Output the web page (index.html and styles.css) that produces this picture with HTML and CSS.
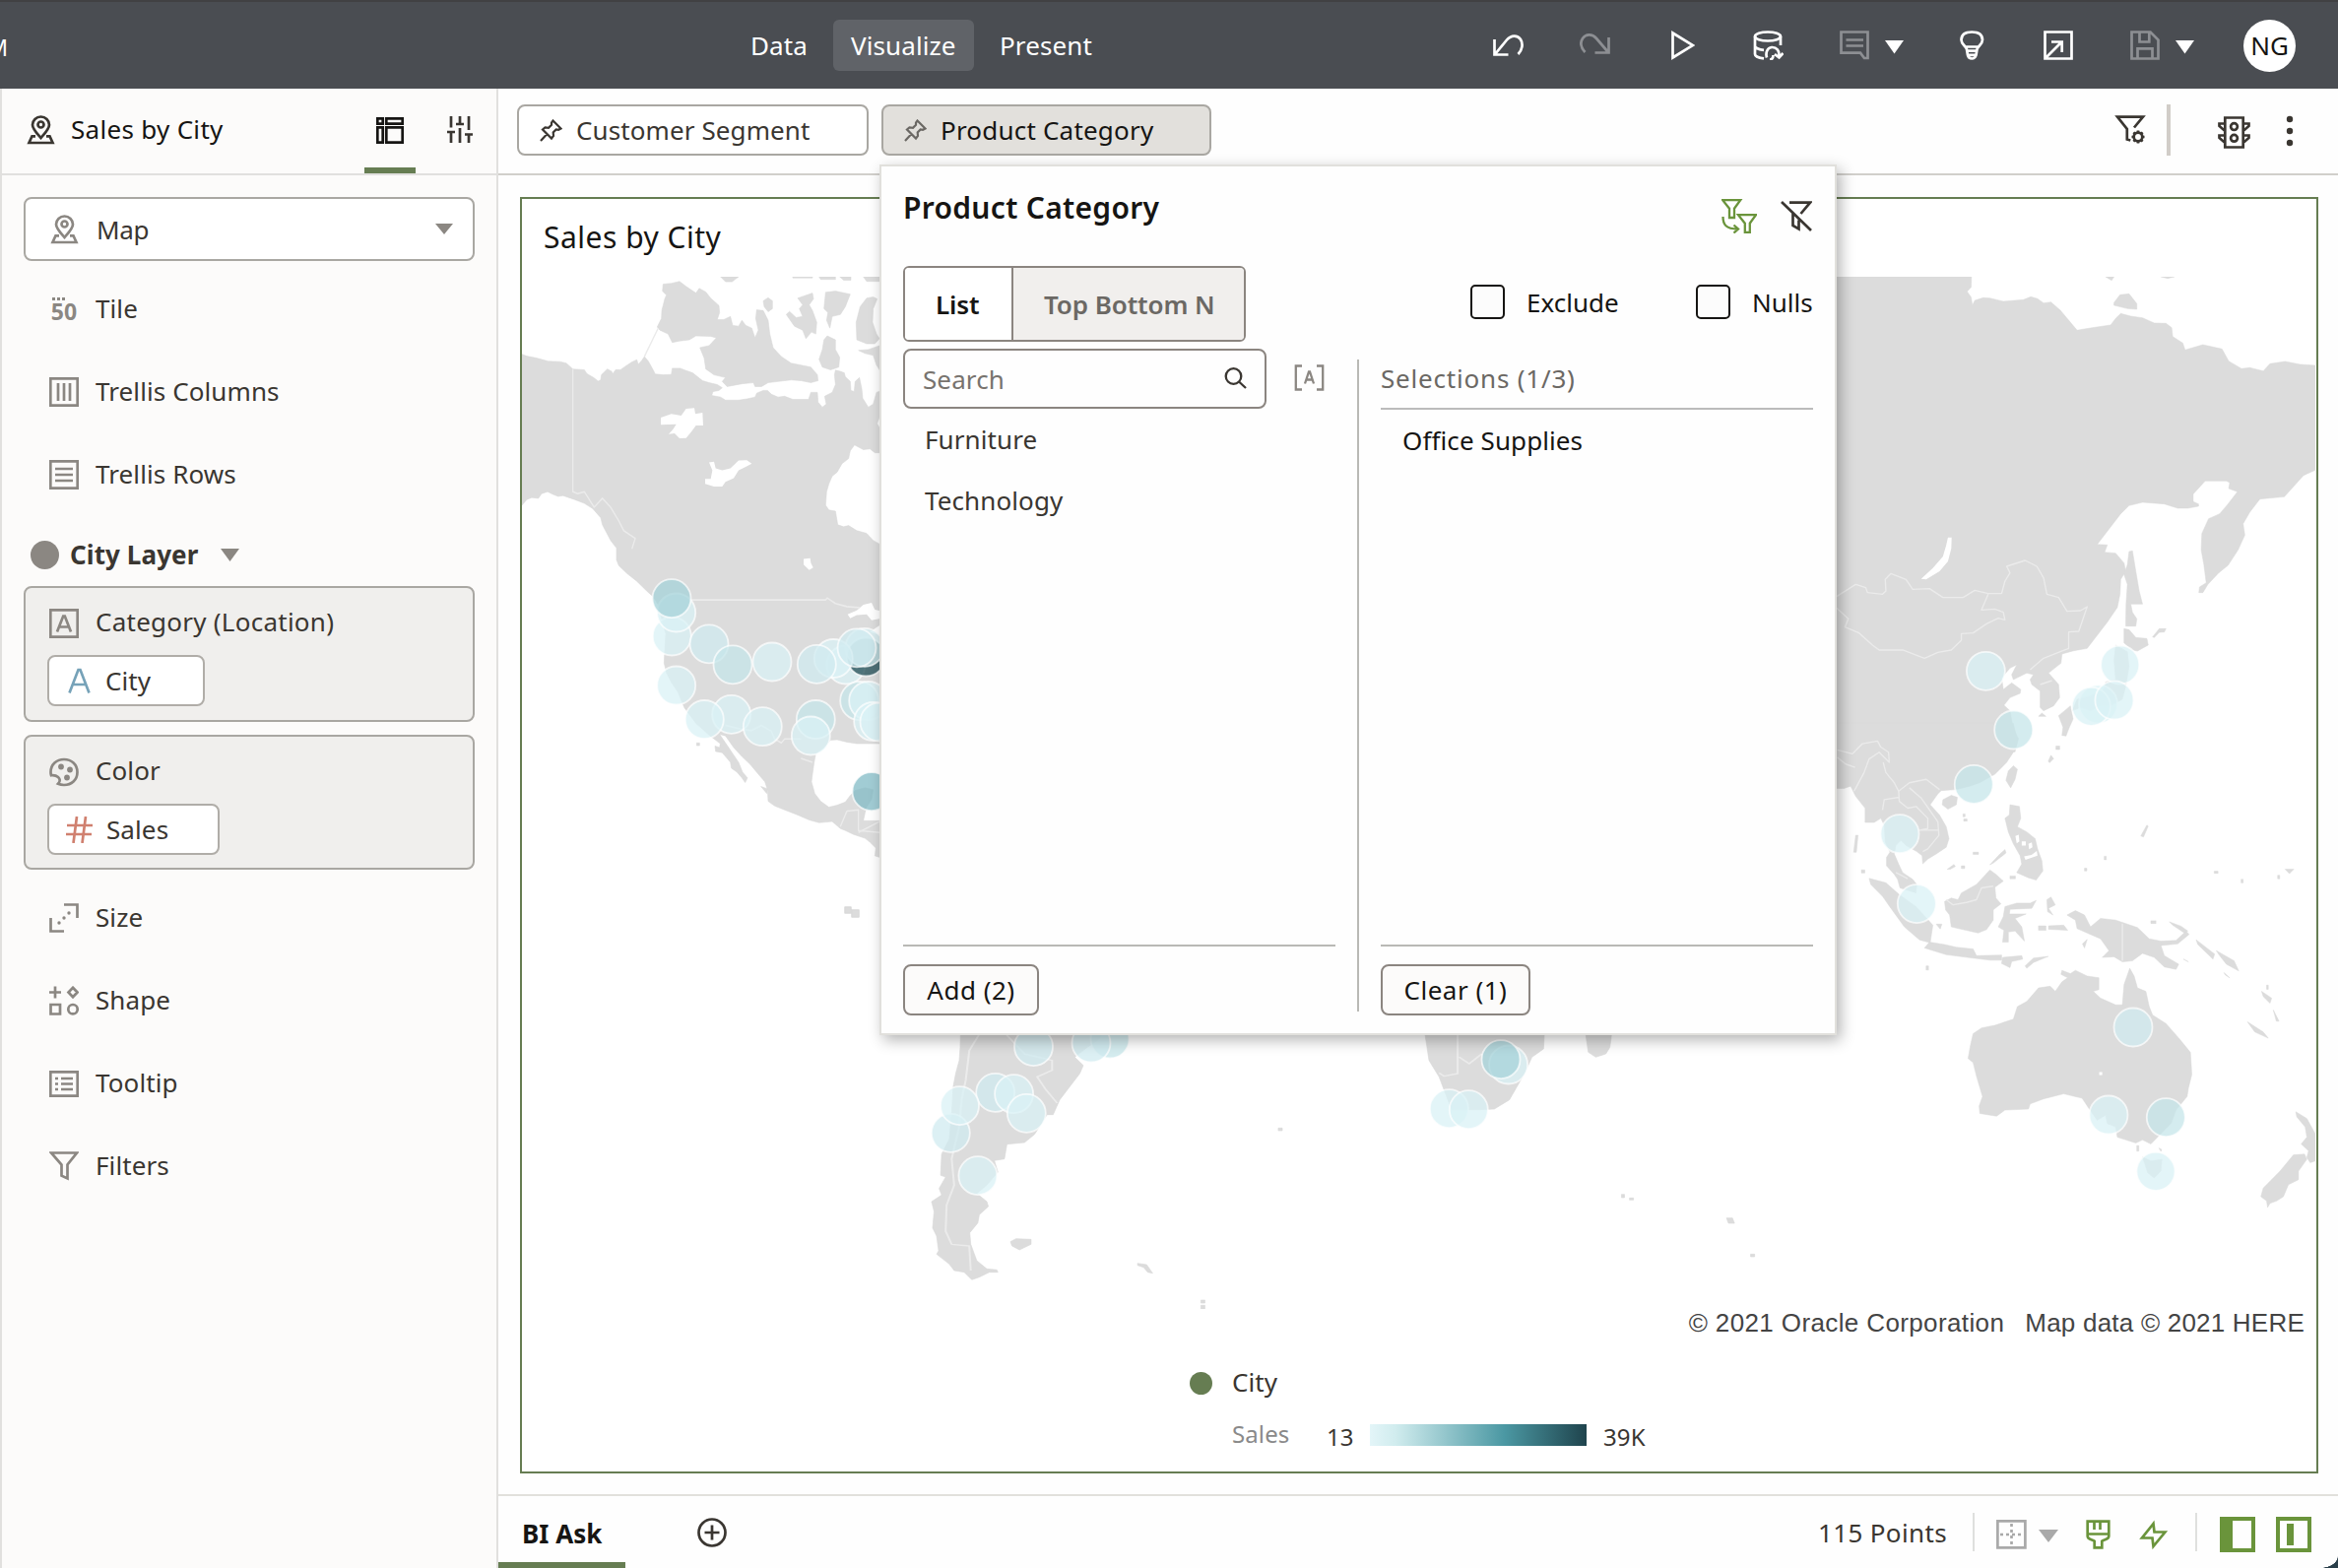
FILE: index.html
```html
<!DOCTYPE html>
<html lang="en">
<head>
<meta charset="utf-8">
<title>Sales by City</title>
<link rel="stylesheet" href="styles.css">
</head>
<body>
<header class="topbar">
  <span class="brand"><span>M</span></span>
  <nav class="modes">
    <a class="mode mode-data">Data</a>
    <a class="mode mode-visualize active">Visualize</a>
    <a class="mode mode-present">Present</a>
  </nav>
  <svg class="ic undo" width="31" height="22" viewBox="0 0 31 22"><path d="M1.500 5v15.500h14M2.500 19.500L14 5.500C18.500 .2 25 .5 28 5c2.800 4.500 1.800 10.500-2.500 15"/></svg>
  <svg class="ic redo dim" width="31" height="22" viewBox="0 0 31 22"><path d="M29.500 4v15.500h-14M28.500 18.500L17 5C12.500-.2 6 .5 3 5c-2.800 4.500-1.800 9.500 2.500 14"/></svg>
  <svg class="ic play" width="24" height="30" viewBox="0 0 24 30"><path d="M1.500 2.500v25L22 15z"/></svg>
  <svg class="ic db" width="31" height="30" viewBox="0 0 31 30"><ellipse cx="15" cy="6" rx="13" ry="4.500"/><path d="M2 6v18c0 2 4 3.800 9 4.400M28 6v9M2 15.500c0 2 4 3.800 9 4.300M14 27.500c-1.500-5 .5-10 5-10.500 5-.3 8 3.500 7.500 9M22 24l4.500 3.500 4-4.500M17 29.500c3 0 3.500-2 3.500-4.500"/></svg>
  <svg class="ic comment dim" width="30" height="30" viewBox="0 0 30 30"><path d="M1.500 1.500h27v26.500h-3.500l-4-5.300H1.500zM6.500 9.500h17.500M6.500 15.500h17.500"/></svg>
  <svg class="solid caret" width="19" height="14" viewBox="0 0 19 14"><path d="M0 0h19L9.500 13.500z"/></svg>
  <svg class="ic bulb" width="25" height="30" viewBox="0 0 25 30"><path d="M7 19C6 15.500 1.500 14 1.500 9.500 1.500 4 6 1.500 12.200 1.500S23 4 23 9.500C23 14 18.500 15.500 17.500 19l-1 6q-1 3.500-4.300 3.500T8 25zM5.500 16.500h13.500M7.500 20.700h9.500M9 24.800h6.500"/></svg>
  <svg class="ic export" width="30" height="30" viewBox="0 0 30 30"><path d="M1.500 1.500h27v27h-27zM2.500 27.500L18 12M8 11.500h10.700V22"/></svg>
  <svg class="ic save dim" width="30" height="30" viewBox="0 0 30 30"><path d="M1.500 1.500H20.500l8 8v19h-27zM9.500 2v9.500h9.800V2M7.500 28V18.300H22.500V28"/></svg>
  <svg class="solid caret" width="19" height="14" viewBox="0 0 19 14"><path d="M0 0h19L9.500 13.500z"/></svg>
  <span class="avatar">NG</span>
</header>

<div class="workspace">
<aside class="grammar">
  <div class="grammar-head">
    <svg class="ic" width="29" height="30" viewBox="0 0 29 30"><path d="M14.500 23C10 18 6 14 6 9.800a8.500 8.300 0 0 1 17 0C23 14 19 18 14.500 23zM9 21.300H5.500L2.500 28h24l-3-6.700H20"/><circle cx="14.500" cy="9.500" r="3"/></svg>
    <span class="grammar-title">Sales by City</span>
    <span class="grammar-tab">
      <svg class="ic" width="28" height="27" viewBox="0 0 28 27"><path d="M1.300 1.300h5.400v5.400H1.300zM10.300 1.300h16.400v5.400H10.300zM1.300 10.300h5.400v15.400H1.300zM10.300 10.300h16.400v15.400H10.300z"/></svg>
    </span>
    <svg class="ic sliders" width="26" height="27" viewBox="0 0 26 27"><path d="M4 0v11.500M0 16h8M4 16v11M13 0v7.500M9 8h8M13 12v15M22 0v14M18 18.500h8M22 18.500V27"/></svg>
  </div>
  <div class="grammar-body">
    <div class="viz-select">
      <svg class="ic" width="29" height="30" viewBox="0 0 29 30"><path d="M14.500 23C10 18 6 14 6 9.800a8.500 8.300 0 0 1 17 0C23 14 19 18 14.500 23zM9 21.300H5.500L2.500 28h24l-3-6.700H20"/><circle cx="14.500" cy="9.500" r="3"/></svg>
      <span class="viz-name">Map</span>
      <svg class="solid" width="18" height="11" viewBox="0 0 18 11"><path d="M0 0h18L9 11z"/></svg>
    </div>
    <div class="row"><span class="tile-ic"><i></i><b>50</b></span><span>Tile</span></div>
    <div class="row"><svg class="ic" width="30" height="30" viewBox="0 0 30 30"><path d="M1.300 1.300h27.400v27.400H1.300zM9 6v18M15 6v18M21 6v18"/></svg><span>Trellis Columns</span></div>
    <div class="row"><svg class="ic" width="30" height="30" viewBox="0 0 30 30"><path d="M1.300 1.300h27.400v27.400H1.300zM6 9h18M6 15h18M6 21h18"/></svg><span>Trellis Rows</span></div>
    <div class="layer"><i class="layer-dot"></i><b>City Layer</b><svg class="solid" width="19" height="13" viewBox="0 0 19 13"><path d="M0 0h19L9.500 13z"/></svg></div>
    <section class="edge">
      <div class="edge-label"><svg class="ic" width="30" height="30" viewBox="0 0 30 30"><path d="M1.300 1.300h27.400v27.400H1.300zM8 23.500l6.200-16h1.600l6.200 16M10.500 18.500h9"/></svg><span class="label-wide">Category (Location)</span></div>
      <div class="pill pill-city"><svg class="ic attr" width="23" height="26" viewBox="0 0 23 26"><path d="M1.500 25.500L10.500 2h2l9 23.500M5 17h13"/></svg><span>City</span></div>
    </section>
    <section class="edge edge-color">
      <div class="edge-label"><svg class="ic" width="30" height="30" viewBox="0 0 30 30"><path d="M1.500 15C1.500 7 7.500 2 15 2s13.500 5 13.500 13S22.500 28 15 28c-2 0-4-.3-6-1.200 2.500-2.500 2-5 0-6.800-2.200-2-5-2-7-1.800-.4-1-.5-2-.5-3.200z"/><g class="dots"><circle cx="12" cy="9.500" r="2.900"/><circle cx="21" cy="12.500" r="2.900"/><circle cx="18" cy="20.500" r="2.900"/></g></svg><span>Color</span></div>
      <div class="pill pill-sales"><svg class="ic meas" width="27" height="27" viewBox="0 0 27 27"><path d="M11 0L7.500 27M20 0l-3.500 27M1 9h26M0 18h26"/></svg><span>Sales</span></div>
    </section>
    <div class="row row-size"><svg class="ic" width="30" height="30" viewBox="0 0 30 30"><path d="M15 1.500h13.500V15M1.500 15v13.500H15"/><g class="dots"><circle cx="10" cy="20" r="1.700"/><circle cx="15" cy="15" r="1.700"/><circle cx="20" cy="10" r="1.700"/></g></svg><span>Size</span></div>
    <div class="row"><svg class="ic" width="30" height="30" viewBox="0 0 30 30"><path d="M0 6.500h12M6 .5v12M24 1.800l4.500 4.700-4.500 4.700-4.500-4.700zM1.500 19h9.500v9.500H1.500z"/><circle cx="24" cy="23.700" r="4.700"/></svg><span>Shape</span></div>
    <div class="row"><svg class="ic" width="30" height="27" viewBox="0 0 30 27"><path d="M1.300 1.300h27.400v24.400H1.300zM12 8h12M12 13.500h12M12 19h12M6 8h3M6 13.500h3M6 19h3"/></svg><span>Tooltip</span></div>
    <div class="row"><svg class="ic" width="30" height="30" viewBox="0 0 30 30"><path d="M2 1.500h26L18.500 13.500V27.500l-6-2.800V13.500z"/></svg><span>Filters</span></div>
  </div>
</aside>

<main class="main">
  <div class="filterbar">
    <div class="chip chip-segment"><svg class="ic" width="23" height="23" viewBox="0 0 23 23"><path d="M13.500 1.500l8 8-2.500 1.300-2.300-.3-3 3 .3 3.500-2 2.500-9-9 2.500-2 3.500.3 3-3L12 3.500zM7 15.500L1 22"/></svg><span>Customer Segment</span></div>
    <div class="chip chip-category"><svg class="ic" width="23" height="23" viewBox="0 0 23 23"><path d="M13.500 1.500l8 8-2.500 1.300-2.300-.3-3 3 .3 3.500-2 2.500-9-9 2.500-2 3.500.3 3-3L12 3.500zM7 15.500L1 22"/></svg><span>Product Category</span></div>
    <svg class="ic filter-gear" width="32" height="29" viewBox="0 0 32 29"><path d="M20 12.500L29 1.700H3l9.800 12.300v10.500l3.500 1"/><circle cx="24" cy="22" r="4.300"/><path d="M24 15.500v3M24 25.500v3M17.500 22h3M27.500 22h3M19.400 17.400l2 2M26.600 24.600l2 2M19.400 26.600l2-2M26.600 19.400l2-2"/></svg>
    <i class="bar-sep"></i>
    <svg class="ic traffic" width="33" height="33" viewBox="0 0 33 33"><path d="M7.300 1.500h18.400v30H7.300zM7.300 7.500H1.500V10L7.300 15M25.700 7.500h5.800V10L25.700 15M7.300 19.500H1.500V22L7.300 27M25.700 19.500h5.800V22L25.700 27"/><circle cx="16.500" cy="10.600" r="3.400"/><circle cx="16.500" cy="22.300" r="3.400"/></svg>
    <svg class="solid kebab" width="8" height="32" viewBox="0 0 8 32"><circle cx="4" cy="4" r="3.200"/><circle cx="4" cy="16" r="3.200"/><circle cx="4" cy="28" r="3.200"/></svg>
  </div>

  <div class="canvas">
    <section class="card">
      <h2>Sales by City</h2>
      <svg class="map" width="1821" height="1048" viewBox="530 281 1821 1048">
        <g transform="translate(520 260) scale(.33333 .3954)">
          <g class="land">
            <path d="M30 252L45 257 75 262 110 270 145 271 165 275 185 290 220 292 228 302 248 312 262 321 270 318 272 305 290 290 303 296 307 302 315 292 330 292 345 283 365 272 380 266 384 278 395 268 403 258 415 270 430 293 436 303 460 305 485 304 488 288 512 288 530 294 550 300 580 320 600 325 625 330 640 338 630 345 612 348 608 358 635 362 650 370 690 370 720 366 740 362 745 352 765 345 778 345 790 355 810 362 830 360 855 368 885 368 903 368 910 350 930 350 932 375 945 388 957 380 952 360 975 350 985 330 982 305 985 293 1000 296 1012 300 1015 310 1030 322 1032 345 1042 348 1045 322 1058 312 1065 340 1068 365 1085 388 1100 380 1110 350 1125 345V400L1112 430 1125 450V505H1105L1090 495 1070 497 1043 485 1030 500 1025 520 1005 533 990 555 975 565 965 585 958 605 955 640 965 652 985 655 992 690 1010 695 1025 692 1050 705 1080 712 1100 730 1125 742V1252H1050L1020 1248 990 1242 970 1243 950 1262 925 1278 920 1300 915 1330 912 1350 922 1380 940 1400 965 1415 990 1410 1015 1402 1030 1385 1045 1372 1075 1365 1100 1370 1095 1395 1080 1415 1075 1430 1070 1450H1125V1545L1105 1540 1108 1520 1090 1505 1075 1495 1040 1485 1015 1475 1000 1470 975 1452 935 1455 905 1448 870 1435 830 1422 800 1412 780 1400 778 1370 770 1350 750 1330 725 1305 700 1285 675 1262 650 1232 632 1228 650 1250 670 1275 690 1300 702 1325 717 1340 710 1352 700 1340 685 1325 668 1315 665 1300 650 1285 640 1275 620 1272 618 1258 632 1262 634 1252 600 1230 560 1200 525 1160 520 1150 505 1120 485 1095 470 1070 463 1045 465 1010 468 970 455 930 445 895 430 875 410 860 380 835 350 815 325 795 318 780 318 750 300 730 275 690 270 672 245 648 220 635 190 625 155 615 140 617 125 612 108 605 90 610 80 622 60 620 45 625 30 640z"/>
            <path d="M460 72L485 70 510 65 530 78 560 95 570 83 590 92 605 108 630 127 632 145 625 163 645 163 665 155 672 178 690 180 700 165 712 178 730 185 740 210 750 190 742 160 745 138 765 140 780 165 785 200 795 235 820 258 850 275 880 280 910 285 930 305 932 320 910 325 880 320 850 318 810 322 780 325 760 335 740 335 735 325 700 328 655 335 640 322 650 312 615 305 590 290 585 262 572 235 600 230 622 210 605 206 560 205 540 215 510 218 488 222 475 200 450 190 442 182 455 160 456 140 465 110 470 100 458 90z"/>
            <path d="M765 115L780 107 793 115V135L780 143 768 130zM870 108L915 95 918 110 905 125 915 140 928 170 925 200 912 195 895 212 885 190 860 180 835 150 845 142 865 158 885 155 875 135 885 125zM955 93L985 90 1030 98 1015 130 1000 150 975 155 968 185 958 165 962 145 950 135zM960 205L985 215V240L998 260 995 285 970 292 945 285 935 265 945 240 950 215zM1080 108L1100 105 1112 110 1100 135 1098 170 1110 200 1119 212 1105 225 1080 225 1050 215 1048 170 1060 130zM1055 242L1085 240 1119 230 1125 300 1110 280 1100 255 1075 250zM635 53H690L670 66H650zM855 53H915V56H855zM935 53H985V60H940zM998 53H1032V62H1010zM1070 53H1125V65H1080zM758 1362L778 1368 776 1380zM562 1250H571V1257H562z"/>
          </g>
          <g class="water">
            <path d="M453 415L485 405 515 410 530 392 555 390 558 405 580 402 582 435 560 435 545 452 530 467 510 468 495 455 477 457 490 445 500 432 453 433zM600 530L615 528 620 545 640 550 665 545 690 525 715 524 730 533 710 542 690 550 675 570 650 580 640 592 615 592 588 585V572H605L610 550zM888 778L908 776 910 788 917 800 905 806 888 792zM1022 920L1050 910 1070 895 1095 890 1105 908 1125 912V930L1095 935 1080 920 1050 922 1030 930zM1090 965L1125 945V975z"/>
          </g>
          <path class="borders" d="M185 290V605L200 610 220 605 235 625 250 645 275 622 300 645 325 680 340 705 375 725 365 752M545 883H955L960 878 985 892 1020 900 1060 903M403 258L445 185M650 1205L700 1215 730 1218 760 1205 790 1220 800 1240 820 1250 830 1240 880 1240M880 1290L915 1300M1000 1465L1020 1425 1055 1422V1475L1119 1480M1119 1452L1055 1480"/>
        </g>
        <path class="land" d="M858 921h6v6h-6zM865 924h7v7h-7z"/>
        <g transform="translate(1840 260) scale(.3406 .33333)">
          <g class="land">
            <path d="M60 63H475L474 95 462 108 474 125 478 150 485 135 510 127 530 128 570 138 630 133 652 124 672 130 690 143 712 140 740 165 790 226 830 219 890 210 905 190 920 175 950 183 985 188 1020 204 1055 205 1072 218 1075 245 1105 265 1112 286 1165 270 1222 283 1242 320 1280 343 1305 340 1345 350 1365 328 1410 321 1455 330 1500 333V652L1465 668 1408 733 1335 740 1305 780 1285 815 1290 850 1270 895 1240 942 1212 965 1180 1000 1165 1025 1153 1025 1155 1008 1175 995 1168 940 1160 895 1162 845 1182 800 1215 785 1240 755 1268 718 1242 708 1245 690 1235 685H1172L1136 725V748L1152 755V762L1120 768H1090L1050 755 985 750 945 760 920 785 850 878 880 880 872 902 905 905 930 935 935 960 920 985 918 1030 910 1070 880 1115 850 1155 820 1195 780 1202 745 1212 742 1240 705 1270 735 1305 738 1345 720 1370 690 1385 680 1375V1325L655 1305 650 1290 660 1275 640 1270 600 1290 595 1275 610 1245 590 1255 565 1285 570 1320 595 1300 622 1320 620 1332 590 1345 572 1368 590 1385 600 1440 615 1470 605 1510H60z"/>
            <path d="M945 900L955 898 965 960 975 1020 985 1060 950 1060 955 1085 968 1105 965 1127H935L936 1060 940 1000 930 970 940 940zM930 1135L945 1138 965 1162 998 1165 1002 1185 970 1203 955 1200 930 1178zM1015 1160L1035 1135 1055 1135 1050 1145 1035 1146 1020 1162zM905 1185L940 1205 945 1250 935 1310 925 1350 890 1370 860 1370 830 1385 800 1375 775 1385 790 1350 830 1340 870 1320 875 1297 905 1290 900 1230zM735 1400L770 1370 778 1410 765 1440 757 1462 745 1460 748 1435zM675 1402L685 1392 697 1402zM900 142L918 118 945 115 968 145V162L940 160 900 150zM875 63H900L893 74zM1040 63H1080L1060 68z"/>
          </g>
          <path class="water" d="M405 857H416L415 890 405 930 380 960 340 985 325 983 360 950 390 915 400 880z"/>
          <path class="borders" d="M73 1037L130 1000 160 1010 165 1025 210 1030 220 1020 218 985 235 967 280 985 300 1015 350 1013 390 1040 450 1040 485 1018 525 1028 565 1028 575 990 590 965 580 945 635 927 670 945 690 980 700 1030 735 1040 760 1082 800 1080 820 1068 795 1143 765 1145V1195L740 1205 690 1225 650 1260M73 1072L108 1105 98 1130 140 1148 180 1185 200 1200 270 1200 335 1225 375 1207 415 1200 445 1170V1150L480 1148 520 1120 555 1103 575 1108 570 1085 545 1075 505 1078 525 1030M680 1305L715 1293"/>
        </g>
        <g transform="translate(1840 700) scale(.3406 .3444)">
          <g class="land">
            <path d="M60 100H600L612 150 600 185 580 215 545 250 500 275 470 285 430 295 385 298 375 308 352 340 380 370 400 405 408 440 400 465 370 485 345 500 330 514 328 490 312 478 280 460 265 445 250 460 245 485 258 515 270 540 300 560 312 575 310 600 285 592 262 585 255 560 245 545 222 520V495L232 480 218 450 215 400 205 380 185 392H158V350L130 315 115 285 95 292H60z"/>
            <path d="M390 325L415 312 433 318 430 340 405 353 388 340zM600 225L612 235 605 265 592 290 578 268 585 240zM590 340L618 345 622 380 612 405 640 420 665 440 672 470 685 505 688 535 668 562 645 555 610 540 625 515 620 490 600 455 585 420 575 380 588 370zM530 517L560 485 575 472 578 482 540 512zM170 557L220 570 260 605 310 640 360 695 352 747 320 738 275 700 235 645 210 610 175 575zM395 625L415 615 435 620 445 600 490 575 530 532 548 545 570 565 545 583 548 615 563 632 540 650V680L520 708 495 718 450 708 415 700 410 665 398 650zM350 745L395 752 430 760 480 765 490 785 565 783V798H530L480 792 400 782 335 762zM568 790L625 785 628 795 595 802 590 820 565 808zM635 815L660 792 704 787 660 805 640 822zM575 640L610 630 650 630 668 622 655 645 590 648 588 662 638 662 605 675 625 700 633 742 605 712 585 715V745H568L572 710 555 700 570 670zM700 620L712 612 725 635 705 645 718 665 702 655zM705 697L750 695 762 710 705 707zM675 697H697V710H675zM370 692H387L382 706zM760 665L785 652 812 665 830 700 860 675 905 680 970 702 1005 735 1040 742 1085 740 1115 712 1124 722 1090 750 1040 755 1050 785 1093 810 1085 825 1050 818 1020 790 985 778 955 800 925 803 900 788 865 790 885 770 860 735 820 718 790 705 785 680zM1065 685L1100 698 1120 712 1110 718 1075 695zM1145 738L1200 780 1195 795 1150 752zM1205 770L1258 800 1272 830 1235 810 1215 785zM1228 835L1245 850 1232 842zM1107 795L1122 803zM1340 890L1370 910 1365 925 1345 905zM1355 872h5v12h-5zM1375 945L1392 978 1384 978zM1298 980L1345 1010 1360 1028 1320 1010zM820 737L812 762 806 750zM1010 682h15v8h-15zM130 430h7l-5 50h-8zM147 532h10v9h-10zM340 815h7v12h-7zM450 367h6v8h-6zM452 382h10v6h-10zM480 480h16v6h-16zM403 530l20-14 4 6-15 8zM445 520h10v8h-10zM590 550h16v8h-16zM871 492h6v10h-6zM812 527h7v8h-7zM980 432l18-32 4 3-14 32zM1199 536h11v6h-11zM1410 530h26l-13 13zM1279 560h6v10h-6zM1388 548h6v10h-6zM704 212l8-18 8 10-12 12zM727 167h11v10h-11z"/>
            <path d="M480 1015L505 998 545 990 600 972 612 935 640 920 675 880 710 875 725 890 745 862 762 850 742 840 745 828 770 838 785 828 820 845 855 850V885L838 890 860 910 905 930 925 930 930 870 947 822 960 845 970 880 995 890 1005 935 1015 960 1055 985 1095 1030 1128 1070 1132 1135 1122 1175 1118 1200 1085 1240 1070 1280 1030 1320 1010 1340 985 1328 965 1337 910 1320 905 1290 880 1280 875 1255 850 1270 825 1235 805 1205 750 1192 690 1207 650 1222 645 1237 575 1240 550 1258 500 1250 498 1228 508 1200 490 1140 480 1100 465 1088 472 1050z"/>
            <path d="M985 1378L1010 1390 1043 1385 1040 1420 1020 1440 1000 1425zM968 1345h6v16h-6zM1034 1352l8 4-2 6zM1442 1245L1475 1265 1500 1310V1390L1485 1395 1475 1380 1480 1360 1458 1340 1475 1320 1470 1290 1445 1260zM1435 1372L1468 1370 1475 1385 1450 1420V1445L1420 1460 1405 1495 1385 1508 1365 1515 1358 1527 1355 1508 1338 1495 1345 1470 1395 1420z"/>
          </g>
          <path class="water" d="M606 432l10-4 2 20-8 6zM625 448h12v12h-12zM645 455l10-4 2 14-10 6zM632 492l22-4 16-12 2 14-36 12zM856 1128h9v9h-9z"/>
          <path class="borders" d="M75 178L120 190 150 160 195 152 205 170 228 185 230 215 200 185 170 205 155 245 125 300M212 215L220 245 245 275 258 300 290 275 340 265 380 295M258 300L260 330 285 350 310 345 345 380 345 410 320 415M210 355L215 325 258 318M290 290L325 320 350 355 375 390 378 430 345 470 330 478M320 415H375M250 540L285 558M400 620L420 635 460 628 490 620 505 585 540 580M925 690V800M75 200L100 220 128 230"/>
        </g>
        <g transform="translate(900 930) scale(.5102 .33333)">
          <g class="land">
            <path d="M148 340L147 400 145 440 138 480 133 520 130 600 125 680 110 725 108 790 118 795 105 830 110 850 90 870 95 900 92 950 100 975 104 1020 100 1030 125 1060 135 1080 155 1085 170 1108 185 1100 205 1085H222L220 1078 200 1075 180 1050 168 1000 166 965 182 935 185 910 203 885 200 870 180 845 200 820 222 780 215 745 235 740 240 695 275 690 295 665 320 605 332 605 345 560 370 510 385 480 392 455 375 430 400 400 420 380 440 340z"/>
            <path d="M247 992L258 983 288 985V1000L265 1017 250 1005zM500 1058L518 1062 530 1088 520 1085 512 1070 500 1064zM780 646h8v8h-8zM1463 848h6v10h-6zM1479 859h8v6h-8zM626 1170h8v9h-8zM626 1186h8v12h-8zM1672 920h12l4 16h-12zM1720 1030h8v8h-8z"/>
            <path d="M1070 340L1080 440 1100 490 1110 530 1125 590 1180 590 1210 588 1240 560 1270 480 1285 430 1308 405 1310 340zM1390 340L1445 340 1440 400 1432 420 1412 430 1397 415z"/>
          </g>
          <path class="borders" d="M185 360L165 410 158 500 150 560 145 640 130 740 135 820 120 880 118 960 130 1000 165 1005 168 1080M235 355L275 420 330 440 330 470 300 490 318 530 340 570M1137 355V480L1110 488 1100 478M1140 430L1160 450 1185 420"/>
        </g>
        <g class="bubbles">
          <circle cx="859" cy="675" r="19.500"/><circle cx="879.300" cy="667" r="19.500" class="v5"/><circle cx="878" cy="657.400" r="19.500"/>
          <circle cx="682.300" cy="646" r="19.500"/><circle cx="686.700" cy="622" r="19.500"/><circle cx="682" cy="607.600" r="19.500" class="v3"/>
          <circle cx="720" cy="653.800" r="19.500" class="v1"/><circle cx="744" cy="674.800" r="19.500" class="v2"/><circle cx="784" cy="672" r="19.500"/>
          <circle cx="846.300" cy="668.500" r="19.500"/><circle cx="829.300" cy="674.400" r="19.500" class="v1"/><circle cx="870" cy="657.800" r="19.500" class="v1"/>
          <circle cx="686.700" cy="696" r="19.500"/><circle cx="742.700" cy="725.400" r="19.500"/><circle cx="715.300" cy="730.500" r="19.500"/><circle cx="774.300" cy="737.700" r="19.500"/>
          <circle cx="828.300" cy="730.500" r="19.500" class="v2"/><circle cx="823.300" cy="747" r="19.500"/><circle cx="872.700" cy="711.500" r="19.500" class="v2"/><circle cx="881.700" cy="711.500" r="19.500"/>
          <circle cx="886.700" cy="732.500" r="19.500"/><circle cx="893" cy="733" r="19.500"/><circle cx="885" cy="803.700" r="19.500" class="v4"/>
          <circle cx="2044.700" cy="741" r="19.500" class="v2"/><circle cx="2004.200" cy="796.400" r="19.500" class="v2"/><circle cx="1929" cy="846.700" r="19.500"/><circle cx="1946.300" cy="917.600" r="19.500"/>
          <circle cx="2166" cy="1043" r="19.500" class="v1"/><circle cx="2141" cy="1132" r="19.500"/><circle cx="2199.300" cy="1134.600" r="19.500" class="v2"/><circle cx="2189" cy="1189.300" r="19.500"/>
          <circle cx="2016.400" cy="681.300" r="19.500"/><circle cx="2152.700" cy="675" r="19.500"/><circle cx="2130.500" cy="715" r="19.500"/><circle cx="2123.400" cy="717.300" r="19.500"/><circle cx="2146.900" cy="711" r="19.500"/>
          <circle cx="1049.500" cy="1062.700" r="19.500" class="v1"/><circle cx="1127" cy="1055" r="19.500" class="v2"/><circle cx="1108" cy="1059" r="19.500" class="v1"/>
          <circle cx="1010.700" cy="1109.300" r="19.500" class="v1"/><circle cx="1029.600" cy="1110.700" r="19.500"/><circle cx="1042.300" cy="1130.300" r="19.500"/>
          <circle cx="965.300" cy="1150.300" r="19.500" class="v1"/><circle cx="974.500" cy="1122.700" r="19.500"/><circle cx="992.900" cy="1193.700" r="19.500"/>
          <circle cx="1531.600" cy="1081" r="19.500"/><circle cx="1524" cy="1075.700" r="19.500" class="v3"/><circle cx="1471.400" cy="1125.700" r="19.500"/><circle cx="1491.300" cy="1126.700" r="19.500"/>
        </g>
      </svg>
      <div class="credits"><span class="credit-owner">© 2021 Oracle Corporation</span><span>Map data © 2021 HERE</span></div>
      <div class="legend">
        <div class="legend-layer"><i></i><span>City</span></div>
        <div class="legend-scale"><span class="scale-name">Sales</span><span class="scale-min">13</span><i></i><span class="scale-max">39K</span></div>
      </div>
    </section>
  </div>

  <footer class="footer">
    <div class="sheet"><b>BI Ask</b></div>
    <svg class="ic add-sheet" width="30" height="30" viewBox="0 0 30 30"><circle cx="15" cy="15" r="13.500"/><path d="M15 7.500v15M7.500 15h15"/></svg>
    <span class="points">115 Points</span>
    <i class="foot-sep"></i>
    <svg class="ic grid-ic" width="31" height="30" viewBox="0 0 31 30"><path d="M1.400 1.400h28v27h-28z"/><path stroke-dasharray="3 3" d="M15.500 4v22M4 15h24"/></svg>
    <svg class="solid grid-caret" width="20" height="13" viewBox="0 0 20 13"><path d="M0 0h20L10 13z"/></svg>
    <svg class="ic green brush" width="25" height="30" viewBox="0 0 25 30"><path d="M1.700 1.700h21.600v15c0 3.500-5.500 3.500-7 5v6.600H8.700v-6.600c-1.500-1.500-7-1.500-7-5zM1.700 14.500h21.600M8.500 2v8M14.500 2v8"/></svg>
    <svg class="ic green bolt" width="29" height="31" viewBox="0 0 29 31"><path d="M14.500 4L3 18.500h10.500l1 8.500L26.500 12.500H15.500z"/></svg>
    <i class="foot-sep foot-sep2"></i>
    <svg class="ic green panel-a" width="36" height="36" viewBox="0 0 36 36"><path d="M2 2h32v32H2z"/><path class="block" d="M2 2h11v32H2z"/></svg>
    <svg class="ic green panel-b" width="36" height="36" viewBox="0 0 36 36"><path d="M2 2h32v32H2z"/><path class="block" d="M11 7h7v22h-7z"/></svg>
  </footer>
</main>
</div>

<section class="popup">
  <div class="popup-head">
    <h3>Product Category</h3>
    <svg class="ic green chain" width="36" height="35" viewBox="0 0 36 35"><path d="M1.200 1.200h18l-6.200 8.500v9.300H8V9.700zM17 16.200h18l-6.200 8.500V34h-5v-9.300zM1.500 18c0 8 3 12.500 15 12.500M12.500 26.500l4.500 4-4.500 4"/></svg>
    <svg class="ic filter-off" width="32" height="31" viewBox="0 0 32 31"><path d="M9 1.700h21L20.500 13M12.500 12v13l6 3.500v-9M1 1l30 29"/></svg>
  </div>
  <div class="controls">
    <div class="toggle"><span class="t-list">List</span><span class="t-top">Top Bottom N</span></div>
    <label class="check check-exclude"><i></i><span>Exclude</span></label>
    <label class="check"><i></i><span>Nulls</span></label>
  </div>
  <div class="picker">
    <div class="col">
      <div class="search-row">
        <div class="search"><span>Search</span><svg class="ic" width="23" height="22" viewBox="0 0 23 22"><circle cx="9.500" cy="9" r="7.800"/><path d="M15 14.500l7 6.500"/></svg></div>
        <svg class="ic match" width="31" height="27" viewBox="0 0 31 27"><path d="M8 1.500H1.800v24H8M23 1.500h6.200v24H23M11 19.500L15 7.500h1l4 12M12.500 15.500h6"/></svg>
      </div>
      <ul class="values"><li>Furniture</li><li>Technology</li></ul>
      <button class="btn-add">Add (2)</button>
    </div>
    <i class="divider"></i>
    <div class="col">
      <div class="sel-head">Selections (1/3)</div>
      <ul class="values chosen"><li>Office Supplies</li></ul>
      <button class="btn-clear">Clear (1)</button>
    </div>
  </div>
</section>
<i class="corner"></i>
</body>
</html>
```
FILE: styles.css
```css
* { box-sizing: border-box; }
html, body { margin: 0; }
body {
  width: 2374px;
  height: 1592px;
  overflow: hidden;
  position: relative;
  display: flex;
  flex-direction: column;
  background: #fefefe;
  color: #3a3631;
  font-family: "Noto Sans", "Open Sans", sans-serif;
  font-size: 26px;
  line-height: 36px;
  letter-spacing: .1px;
}
h2, h3, ul { margin: 0; padding: 0; font-weight: 400; list-style: none; }
i { display: block; flex: none; }
b { font-weight: 600; }
svg { display: block; flex: none; }
span, a { white-space: nowrap; }
.ic { fill: none; stroke: currentColor; stroke-width: 2.7; }
.solid, .dots, .block { fill: currentColor; stroke: none; }

/* top bar */
.topbar {
  height: 90px;
  flex: none;
  display: flex;
  align-items: center;
  background: #4a4d52;
  border-top: 2px solid #414143;
  color: #fff;
}
.brand { width: 8px; margin-right: 736px; display: flex; justify-content: flex-end; overflow: hidden; font-size: 23px; letter-spacing: 0; padding-top: 4px; }
.modes { display: flex; gap: 8px; }
.mode { height: 52px; line-height: 52px; padding-left: 18px; border-radius: 6px; }
.mode-data { width: 94px; }
.mode-visualize { width: 143px; }
.mode-present { width: 130px; }
.mode.active { background: #606368; }
.undo { margin-left: 389px; }
.redo { margin: -3px 0 0 57px; }
.dim { color: #8d8f93; }
.play { margin-left: 62px; }
.db { margin-left: 59px; }
.comment { margin-left: 57px; }
.save { margin-left: 58px; }
.topbar .caret { margin: 3px 0 0 16px; }
.bulb { margin-left: 57px; }
.export { margin-left: 60px; }
.avatar {
  width: 53px; height: 53px; margin-left: 50px; border-radius: 50%;
  background: #fff; color: #161513; text-align: center; line-height: 52px; letter-spacing: 0;
}

.workspace { flex: 1; display: flex; min-height: 0; }

/* grammar panel */
.grammar { width: 506px; flex: none; background: #fcfbfa; border: solid #e1e0de; border-width: 0 2px; }
.grammar-head { height: 88px; display: flex; align-items: center; border-bottom: 2px solid #e1e0de; padding-left: 25px; }
.grammar-head > .ic { margin-top: -3px; }
.grammar-title { width: 298px; margin: -5px 0 0 16px; color: #161513; letter-spacing: .3px; }
.grammar-tab { width: 52px; height: 84px; display: flex; align-items: center; justify-content: center; border-bottom: 6px solid #667d52; padding-top: 2px; margin-bottom: -2px; color: #161513; }
.sliders { margin-left: 32px; }
.grammar-body { padding: 22px; display: flex; flex-direction: column; }
.viz-select { height: 65px; margin-bottom: 7px; padding: 0 20px 0 25px; border: 2px solid #a9a7a2; border-radius: 8px; background: #fff; display: flex; align-items: center; color: #8b8782; }
.viz-name { flex: 1; margin-left: 18px; color: #3a3631; letter-spacing: -.3px; }
.row, .edge-label { height: 84px; padding-left: 26px; display: flex; align-items: center; gap: 17px; }
.row svg, .edge-label svg { color: #8b8782; }
.row > span:last-child { margin-top: -2px; }
.tile-ic { width: 30px; display: flex; flex-direction: column; align-items: center; color: #8b8782; padding-top: 2px; }
.tile-ic i { width: 13px; height: 3px; align-self: flex-start; margin-left: 3px; background: repeating-linear-gradient(90deg, #8b8782 0 3px, transparent 3px 5px); }
.tile-ic b { font-size: 23px; line-height: 23px; letter-spacing: 0; font-weight: 700; }
.layer { height: 71px; padding: 8px 0 0 7px; display: flex; align-items: center; }
.layer-dot { width: 29px; height: 29px; border-radius: 50%; background: #8b8782; }
.layer b { width: 153px; margin: -2px 0 0 11px; font-weight: 700; }
.layer svg { color: #8b8782; }
.edge { height: 138px; padding-top: 3px; background: #f0efed; border: 2px solid #a9a7a2; border-radius: 8px; }
.edge-color { height: 137px; margin-top: 13px; margin-bottom: 7px; }
.edge-label { height: 65px; padding-left: 24px; }
.edge-label span { margin-top: -4px; }
.edge-label .label-wide { letter-spacing: .25px; }
.pill { height: 52px; margin-left: 22px; border: 2px solid #b0ada8; border-radius: 8px; background: #fff; display: flex; align-items: center; }
.pill-city { width: 160px; padding-left: 19px; gap: 15px; }
.pill-sales { width: 175px; padding-left: 17px; gap: 14px; }
.attr { color: #76a2b8; }
.meas { color: #d0806f; }

/* main area */
.main { flex: 1; display: flex; flex-direction: column; min-width: 0; }
.filterbar { height: 88px; flex: none; display: flex; align-items: center; padding-left: 19px; border-bottom: 2px solid #d1cfcb; }
.chip { height: 52px; margin-top: -2px; padding-left: 21px; border: 2px solid #a9a7a2; border-radius: 8px; display: flex; align-items: center; gap: 14px; background: #fff; }
.chip svg { stroke-width: 2.2; }
.chip-segment { width: 357px; }
.chip-category { width: 335px; margin-left: 13px; background: #e2e0dc; color: #161513; letter-spacing: .2px; }
.chip-category svg { color: #6b6864; }
.filter-gear { margin-left: 917px; margin-top: -4px; }
.bar-sep { width: 4px; height: 52px; margin: -2px 0 0 21px; background: #d1cdc8; }
.traffic { margin: 2px 0 0 48px; }
.kebab { margin: 0 0 0 36px; }
.canvas { flex: 1; padding: 22px 20px 21px 22px; }
.card { height: 1296px; border: 2px solid #667d52; display: flex; flex-direction: column; background: #fff; }
.card h2 { height: 79px; line-height: 78px; padding-left: 22px; font-size: 30px; letter-spacing: .5px; color: #161513; }
.land { fill: #dcdcdc; stroke: #d9d9d9; stroke-width: 1.5; stroke-linejoin: round; }
.water { fill: #fff; }
.borders { fill: none; stroke: #ebebeb; stroke-width: 4; stroke-linejoin: round; }
.bubbles { fill: #d9f1f5; fill-opacity: .75; stroke: #fff; stroke-opacity: .7; stroke-width: 1.8; }
.v1 { fill: #d0ebf0; }
.v2 { fill: #c6e5ea; }
.v3 { fill: #a6d3da; }
.v4 { fill: #82bbc6; }
.v5 { fill: #1f4b53; }
.credits { height: 28px; line-height: 28px; display: flex; justify-content: flex-end; gap: 21px; padding-right: 12px; font-family: "Liberation Sans", sans-serif; color: #444; letter-spacing: .22px; }
.credit-owner { letter-spacing: .38px; }
.legend { margin: 21px 0 0 678px; }
.legend-layer { height: 52px; display: flex; align-items: center; gap: 20px; }
.legend-layer i { width: 23px; height: 23px; border-radius: 50%; background: #667d52; }
.legend-layer span { margin-top: -2px; }
.legend-scale { height: 54px; padding-left: 43px; display: flex; align-items: center; font-size: 24px; }
.legend-scale i { width: 220px; height: 22px; background: linear-gradient(90deg, #e3f5f8 0%, #d0ecee 12%, #4b98a3 62%, #1f444d 100%); }
.scale-name { width: 96px; color: #8a8a8a; margin-top: -3px; }
.scale-min { width: 44px; margin-top: 3px; }
.scale-max { margin: 3px 0 0 17px; }

/* sheet bar */
.footer { height: 75px; flex: none; border-top: 2px solid #e1e0dc; display: flex; align-items: center; }
.sheet { width: 129px; height: 73px; padding-left: 24px; border-bottom: 6px solid #667d52; color: #161513; line-height: 77px; letter-spacing: 0; }
.sheet b { font-weight: 700; }
.add-sheet { margin-left: 73px; }
.points { width: 157px; margin-left: 1108px; letter-spacing: .35px; }
.foot-sep { width: 2px; height: 39px; background: #dfe0de; }
.grid-ic { margin-left: 22px; margin-top: 5px; color: #a9a9a9; }
.grid-caret { margin-left: 12px; margin-top: 8px; color: #a9a9a9; }
.green { color: #6a943b; }
.brush { margin: 5px 0 0 28px; }
.bolt { margin: 5px 0 0 29px; }
.foot-sep2 { margin-left: 28px; }
.panel-a, .panel-b { margin-top: 5px; stroke-width: 4; }
.panel-a { margin-left: 23px; }
.panel-b { margin-left: 21px; }

/* filter popup */
.popup {
  position: absolute; left: 893px; top: 167px; width: 972px; height: 884px;
  padding: 0 22px 18px; background: #fefefe; border: 2px solid #e1e0dc;
  box-shadow: 4px 5px 14px rgba(0, 0, 0, .3);
  display: flex; flex-direction: column;
}
.popup-head { height: 101px; flex: none; display: flex; }
.popup-head h3 { flex: 1; margin-top: 22px; line-height: 40px; font-size: 30px; font-weight: 600; letter-spacing: .3px; color: #161513; }
.chain { margin-top: 33px; stroke-width: 2.3; }
.filter-off { margin: 35px 1px 0 24px; }
.controls { height: 84px; flex: none; display: flex; }
.toggle { width: 348px; height: 77px; flex: none; border: 2px solid #8b8580; border-radius: 6px; display: flex; overflow: hidden; line-height: 74px; font-weight: 600; letter-spacing: -.1px; }
.t-list { width: 110px; padding-left: 31px; border-right: 2px solid #8b8580; color: #161513; background: #fff; }
.t-top { flex: 1; padding-left: 31px; background: #f1efed; color: #6b6864; }
.check { height: 73px; display: flex; align-items: center; gap: 22px; color: #161513; letter-spacing: 0; }
.check-exclude { margin-left: 228px; width: 229px; flex: none; }
.check i { width: 35px; height: 35px; border: 2px solid #161513; border-radius: 5px; background: #fcfcfc; }
.picker { flex: 1; display: flex; }
.col { width: 439px; display: flex; flex-direction: column; align-items: flex-start; }
.search-row { height: 61px; display: flex; align-items: center; }
.search { width: 369px; height: 61px; padding: 0 18px; border: 2px solid #8b8580; border-radius: 8px; display: flex; align-items: center; justify-content: space-between; color: #77736e; }
.search svg { color: #3a3631; stroke-width: 2.3; margin-top: -2px; }
.match { margin: -2px 0 0 28px; color: #8b8782; stroke-width: 2.3; }
.values { align-self: stretch; flex: 1; border-bottom: 2px solid #b9b9b5; }
.values li { height: 62px; line-height: 62px; padding-left: 22px; }
.chosen li { color: #161513; }
.sel-head { align-self: stretch; height: 62px; line-height: 61px; border-bottom: 2px solid #bbb; color: #6b6864; letter-spacing: .8px; }
.divider { width: 2px; height: 662px; margin: 11px 22px 0 22px; background: #b9b9b5; }
button { height: 52px; margin-top: 18px; padding: 0; border: 2px solid #8b8580; border-radius: 8px; background: #fcfbfa; font: inherit; letter-spacing: .5px; color: #161513; }
.btn-add { width: 138px; }
.btn-clear { width: 152px; }

/* rounded corner of the application window */
.corner { position: absolute; right: 0; bottom: 0; width: 18px; height: 12px; background: radial-gradient(ellipse 18px 12px at 0 0, transparent 97%, #2a3f4a 100%); }
```
